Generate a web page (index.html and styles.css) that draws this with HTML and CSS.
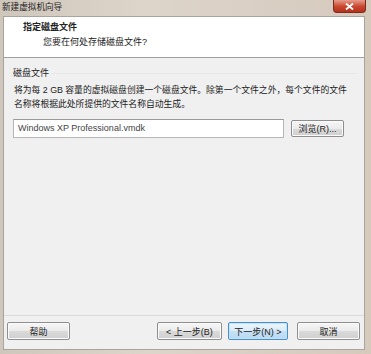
FILE: index.html
```html
<!DOCTYPE html>
<html lang="zh-CN">
<head>
    <meta charset="UTF-8">
    <title>新建虚拟机向导</title>
    <link rel="stylesheet" href="styles.css">
</head>
<body>
    <div class="window">
        <div class="titlebar">
            <span class="title">新建虚拟机向导</span>
            <span class="close">
                <svg width="9" height="7" viewBox="0 0 9 7"><path d="M1 0.5 L8 6.5 M8 0.5 L1 6.5" stroke="#fff" stroke-width="1.8"/></svg>
            </span>
        </div>
        <div class="client">
            <div class="header">
                <div class="header-title">指定磁盘文件</div>
                <div class="header-sub">您要在何处存储磁盘文件?</div>
            </div>
            <div class="content">
                <div class="group">
                    <div class="group-label"><span>磁盘文件</span></div>
                    <p class="desc">将为每 2 GB 容量的虚拟磁盘创建一个磁盘文件。除第一个文件之外，每个文件的文件<br>名称将根据此处所提供的文件名称自动生成。</p>
                    <div class="file-row">
                        <div class="input">Windows XP Professional.vmdk</div>
                        <button class="btn browse">浏览(R)...</button>
                    </div>
                </div>
            </div>
            <div class="footer">
                <button class="btn help">帮助</button>
                <div class="nav">
                    <button class="btn back">&lt; 上一步(B)</button>
                    <button class="btn next">下一步(N) &gt;</button>
                    <button class="btn cancel">取消</button>
                </div>
            </div>
        </div>
    </div>
</body>
</html>
```
FILE: styles.css
```css
body {
    margin: 0;
    padding: 0;
    width: 371px;
    height: 354px;
    overflow: hidden;
    background-color: #d8cec3;
    font-family: "Liberation Sans", "Noto Sans CJK SC", sans-serif;
    font-size: 9px;
    color: #222;
}
.window {
    display: flex;
    flex-direction: column;
    height: 354px;
    background: linear-gradient(90deg, #cfc6bc 0%, #ddd4ca 40%, #d6cabd 100%);
}
.titlebar {
    height: 16px;
    display: flex;
    justify-content: space-between;
    align-items: flex-start;
}
.title {
    padding-left: 2px;
    line-height: 15px;
    font-size: 8.6px;
    color: #1e1e1e;
}
.close {
    width: 33px;
    height: 13px;
    margin-right: 5px;
    border: 1px solid #7c2a1c;
    border-top: none;
    border-radius: 0 0 4px 4px;
    background: linear-gradient(#e79c8c, #c8452e 55%, #b4341e);
    display: flex;
    justify-content: center;
    align-items: center;
    box-sizing: border-box;
}
.client {
    flex: 1;
    margin: 0 6px 4px 3px;
    background-color: #f0f0f0;
    border: 1px solid #a7a39e;
    display: flex;
    flex-direction: column;
}
.header {
    height: 41px;
    box-sizing: border-box;
    background-color: #fff;
    border-bottom: 1px solid #a0a0a0;
    padding: 4px 0 0 19px;
}
.header-title {
    font-weight: bold;
    line-height: 12px;
}
.header-sub {
    line-height: 12px;
    margin-top: 3px;
    padding-left: 20px;
}
.content {
    flex: 1;
    padding: 9px 7px 0 6px;
}
.group {
    padding: 0 0 0 3px;
}
.group-label {
    display: flex;
    align-items: center;
    line-height: 12px;
}
.group-label span {
    padding-right: 3px;
}
.group-label::after {
    content: "";
    flex: 1;
    border-top: 1px solid #e6e6e6;
}
.desc {
    margin: 4px 0 0 1px;
    line-height: 14px;
    font-size: 8.8px;
}
.file-row {
    display: flex;
    align-items: center;
    margin-top: 8px;
}
.input {
    width: 271px;
    height: 19px;
    box-sizing: border-box;
    background-color: #fff;
    border: 1px solid #b6b6b6;
    border-top-color: #9a9a9a;
    padding-left: 4px;
    line-height: 17px;
    color: #444;
}
.btn {
    font-family: "Liberation Sans", "Noto Sans CJK SC", sans-serif;
    font-size: 9px;
    color: #222;
    height: 18px;
    padding: 0;
    box-sizing: border-box;
    border: 1px solid #8e8e8e;
    border-radius: 2px;
    background: linear-gradient(#f6f6f6, #ebebeb 50%, #dadada 51%, #cfcfcf);
    box-shadow: inset 0 0 0 1px #fbfbfb;
}
.browse {
    width: 53px;
    height: 17px;
    margin-left: 7px;
}
.footer {
    height: 27px;
    border-top: 1px solid #dadada;
    display: flex;
    justify-content: space-between;
    align-items: flex-start;
    padding: 6px 4px 0 3px;
}
.nav {
    display: flex;
    gap: 6px;
}
.help {
    width: 63px;
}
.back {
    width: 65px;
}
.next {
    width: 60px;
    margin-right: 3px;
    border-color: #4a8fc7;
    background: linear-gradient(#eef6fc, #d9ebf8 50%, #c4e0f5 51%, #b9d9f2);
    box-shadow: inset 0 0 0 1px #bfe3fb;
}
.cancel {
    width: 63px;
}
```
